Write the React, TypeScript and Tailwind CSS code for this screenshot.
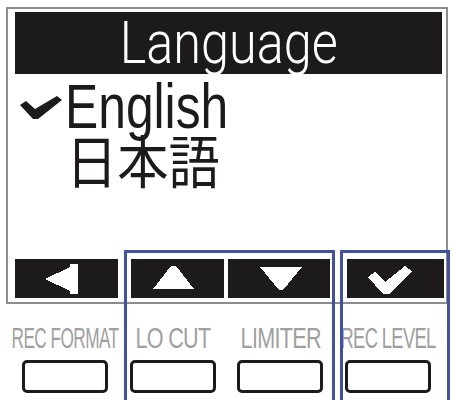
import type { ReactNode } from "react";

type SoftKeyProps = {
  width: string;
  children: ReactNode;
};

function SoftKey({ width, children }: SoftKeyProps) {
  return <div className={`h-full bg-[#1c1a1a] ${width}`}>{children}</div>;
}

// pixel glyphs for the soft-key row
function KeyIcon({ points, w }: { points: string; w: number }) {
  return (
    <svg width={w} height={39} viewBox={`0 0 ${w} 39`} shapeRendering="crispEdges">
      <polygon points={points} fill="#ffffff" />
    </svg>
  );
}

const labels = [
  { text: "REC FORMAT", squeeze: "scale-x-[0.575]" },
  { text: "LO CUT", squeeze: "scale-x-[0.72]" },
  { text: "LIMITER", squeeze: "scale-x-[0.72]" },
  { text: "REC LEVEL", squeeze: "scale-x-[0.61]" },
];

export default function App() {
  return (
    <div className="relative h-[400px] w-[453px] overflow-hidden bg-white font-['Liberation_Sans','Noto_Sans_CJK_JP',sans-serif]">
      {/* LCD screen */}
      <div className="ml-[6px] mt-[7px] flex h-[297px] w-[442px] flex-col border-2 border-[#8c8c8c]">
        <div className="ml-[7px] mr-[4px] mt-[3px] flex h-[62px] items-center justify-center bg-[#1c1a1a]">
          <span className="inline-block scale-x-[0.84] font-['Roboto',sans-serif] text-[60px] font-light leading-none text-white">
            Language
          </span>
        </div>

        <div className="ml-[12px] mt-[4px] flex h-[56px] items-center">
          <svg width="42" height="23" viewBox="0 0 42 23" className="mt-[3px] shrink-0">
            <polygon points="0,9 6,5 15,13 37,0 42,4 18,23 13,23" fill="#1c1a1a" />
          </svg>
          <span className="ml-[3px] inline-block origin-left scale-x-[0.79] text-[63px] leading-[56px] text-[#1c1a1a]">
            English
          </span>
        </div>
        <div className="ml-[58px] mt-[7px] h-[34px]">
          <span className="inline-block origin-left scale-x-[0.9] font-['Noto_Sans_CJK_JP',sans-serif] text-[57px] leading-[34px] text-[#1c1a1a]">
            日本語
          </span>
        </div>

        <div className="mb-[4px] mt-auto flex h-[39px] pl-[7px]">
          <SoftKey width="w-[103px]">
            <KeyIcon w={103} points="30,20 55,8 55,5 63,5 63,35 55,35 55,32" />
          </SoftKey>
          <div className="w-[13px]" />
          <SoftKey width="w-[93px]">
            <KeyIcon w={93} points="40,7 45,7 63,30 22,30" />
          </SoftKey>
          <div className="w-[4px]" />
          <SoftKey width="w-[102px]">
            <KeyIcon w={102} points="32,8 74,8 55,31 51,31" />
          </SoftKey>
          <div className="w-[17px]" />
          <SoftKey width="w-[97px]">
            <KeyIcon w={97} points="21,18 28,13 38,23 58,7 65,12 42,35 36,35" />
          </SoftKey>
        </div>
      </div>

      {/* function labels and hardware keys */}
      <div className="mt-[19px] grid w-[453px] grid-cols-4 px-[11px]">
        {labels.map((label) => (
          <div key={label.text} className="flex flex-col items-center">
            <div className="flex w-full justify-center">
              <span
                className={`inline-block whitespace-nowrap text-[30px] leading-none tracking-[-1px] text-[#a0a0a0] ${label.squeeze}`}
              >
                {label.text}
              </span>
            </div>
            <div className="mt-[7px] h-[33px] w-[86px] rounded-[5px] border-[3px] border-[#1c1a1a] bg-white" />
          </div>
        ))}
      </div>

      {/* highlighted key groups */}
      <div className="absolute left-[124px] top-[250px] h-[160px] w-[211px] border-[3px] border-[#4152a0]" />
      <div className="absolute left-[340px] top-[250px] h-[160px] w-[110px] border-[3px] border-[#4152a0]" />
    </div>
  );
}
